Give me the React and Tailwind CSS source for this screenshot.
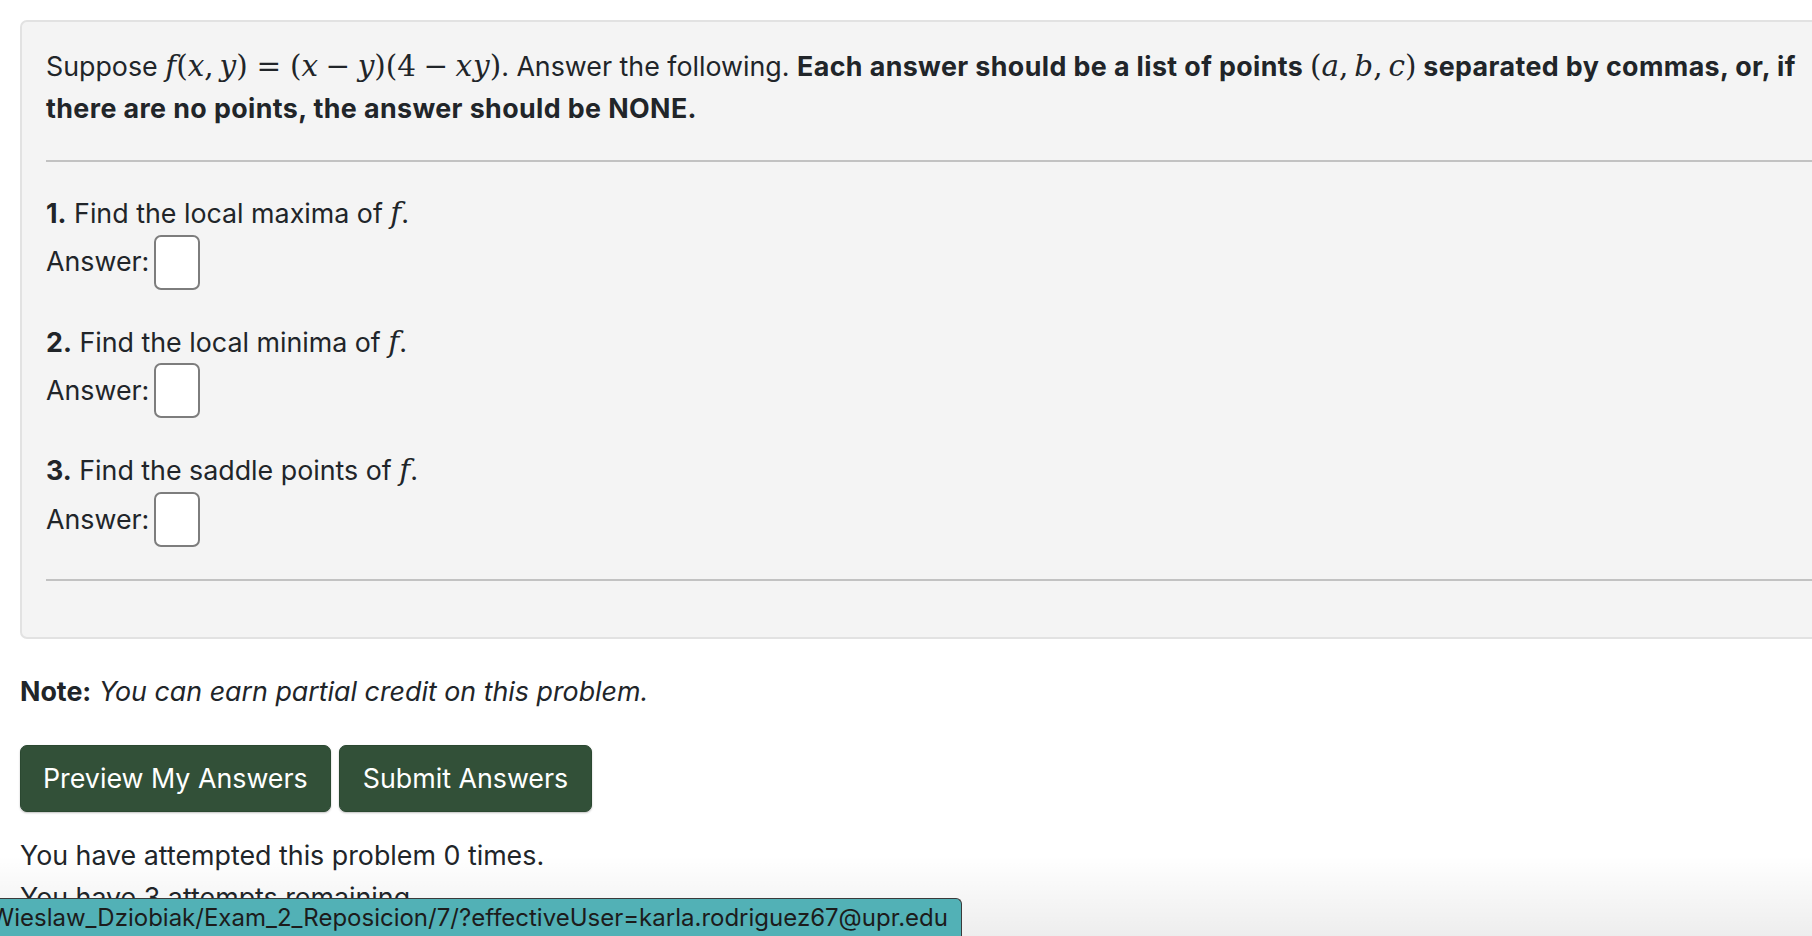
import React from "react";

// math pieces: italic variables, upright operators
const V = ({ children }) => <span className="italic">{children}</span>;
const Op = ({ children }) => <span className="mx-[0.25em]">{children}</span>;
const Rel = ({ children }) => <span className="mx-[0.3em]">{children}</span>;
const Comma = () => <span className="mr-[0.2em]">,</span>;

function M({ children }) {
  return (
    <span className="font-['DejaVu_Serif','Liberation_Serif',serif] text-[1.1em] leading-none tracking-normal whitespace-nowrap font-normal">
      {children}
    </span>
  );
}

function FormulaF() {
  return (
    <M>
      <V>f</V>(<V>x</V>
      <Comma />
      <V>y</V>)<Rel>=</Rel>(<V>x</V>
      <Op>−</Op>
      <V>y</V>)(4<Op>−</Op>
      <V>x</V>
      <span className="ml-[0.03em]" />
      <V>y</V>)
    </M>
  );
}

function Points() {
  return (
    <M>
      (<V>a</V>
      <Comma />
      <V>b</V>
      <Comma />
      <V>c</V>)
    </M>
  );
}

function AnswerBox() {
  return (
    <div className="h-[55px] w-[46px] rounded-[7px] border-2 border-[#7d7d7d] bg-white" />
  );
}

const parts = [
  { n: 1, text: "Find the local maxima of" },
  { n: 2, text: "Find the local minima of" },
  { n: 3, text: "Find the saddle points of" },
];

export default function App() {
  return (
    <div className="relative h-[936px] w-[1812px] overflow-hidden bg-white font-['Inter','Liberation_Sans',sans-serif] text-[26.8px] leading-[41.6px] text-[#212529]">
      <div className="pl-[20px] pt-[20px]">
        <div className="w-[1830px] rounded-[7px] border-2 border-[#e2e2e2] bg-[#f4f4f4] px-[24px] pt-[24px] pb-[56px]">
          <p>
            Suppose <FormulaF />. Answer the following.{" "}
            <b className="tracking-[0.015em]">
              Each answer should be a list of points <Points /> separated by
              commas, or, if there are no points, the answer should be NONE.
            </b>
          </p>
          <hr className="mt-[31px] border-0 border-t-2 border-[#c2c2c2]" />

          <div className="mt-[31px] flex flex-col gap-[32px]">
            {parts.map((p) => (
              <div key={p.n}>
                <div>
                  <b>{p.n}.</b> {p.text}{" "}
                  <M>
                    <V>f</V>
                  </M>
                  .
                </div>
                <div className="flex items-center gap-[5px]">
                  <span>Answer:</span>
                  <AnswerBox />
                </div>
              </div>
            ))}
          </div>

          <hr className="mt-[32px] border-0 border-t-2 border-[#c2c2c2]" />
        </div>

        <p className="mt-[32px]">
          <b>Note:</b> <i>You can earn partial credit on this problem.</i>
        </p>

        <div className="mt-[32px] flex gap-[8px]">
          <button className="rounded-[7px] border border-[#2b4831] bg-[#325038] px-[22px] py-[12px] text-white shadow-[0_1px_2px_rgba(0,0,0,0.25)]">
            Preview My Answers
          </button>
          <button className="rounded-[7px] border border-[#2b4831] bg-[#325038] px-[23px] py-[12px] text-white shadow-[0_1px_2px_rgba(0,0,0,0.25)]">
            Submit Answers
          </button>
        </div>

        <div className="mt-[23px]">
          <p>You have attempted this problem 0 times.</p>
          <p>You have 3 attempts remaining.</p>
        </div>
      </div>

      {/* window bottom shading */}
      <div className="pointer-events-none absolute inset-x-0 bottom-0 h-[80px] bg-gradient-to-b from-transparent to-black/[0.07]" />

      {/* link status bar */}
      <div className="absolute bottom-0 left-0 flex h-[38px] w-[962px] items-center justify-end overflow-hidden rounded-tr-[6px] border-t border-r border-[#3a3a3a] bg-[#52b1b6] pr-[13px] text-[24px] leading-none whitespace-nowrap text-[#1c1c1c]">
        Wieslaw_Dziobiak/Exam_2_Reposicion/7/?effectiveUser=karla.rodriguez67@upr.edu
      </div>
    </div>
  );
}
